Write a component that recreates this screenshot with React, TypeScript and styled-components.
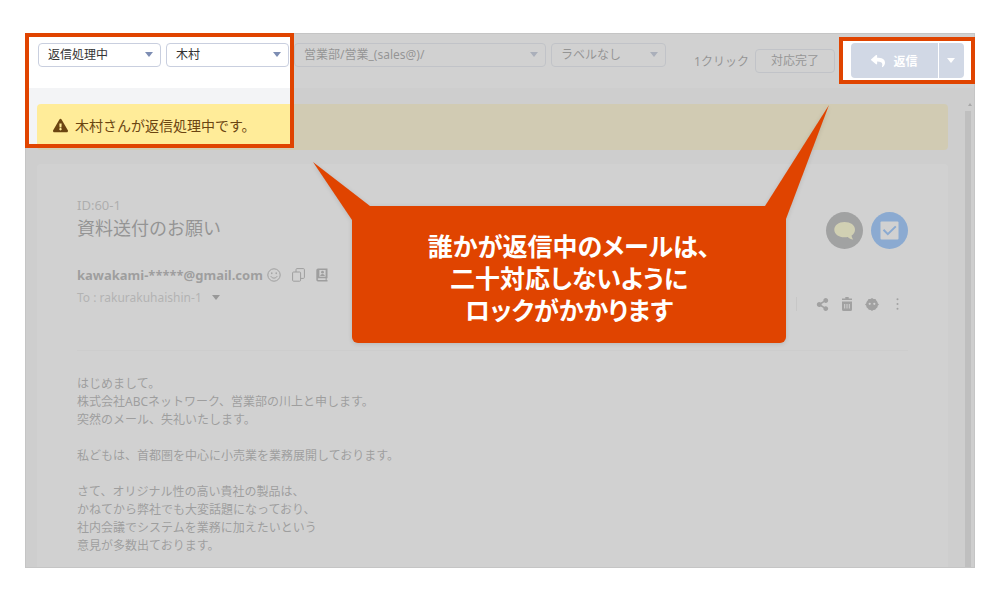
import React from "react";
import styled, { createGlobalStyle } from "styled-components";
import { FaExclamationTriangle, FaReply, FaShareAlt } from "react-icons/fa";

const accent = "#e04400";
const uiFont = `"Noto Sans", "Noto Sans CJK JP", sans-serif`;

const GlobalStyle = createGlobalStyle`
  *, *::before, *::after { box-sizing: border-box; }
  body { margin: 0; background: #fff; font-family: ${uiFont}; font-size: 12px; color: #333; }
  button, select { font: inherit; color: inherit; margin: 0; }
  h1, p { margin: 0; font-weight: 400; }
`;

const Page = styled.div`
  padding: 33px 25px;
`;

const Screen = styled.div`
  position: relative;
  border: 1px solid #d8d8d8;
  background: #f3f4f6;
`;

const Toolbar = styled.header`
  display: flex;
  align-items: flex-start;
  gap: 5px;
  height: 54px;
  padding: 9px 10px 0 12px;
  background: #fff;
`;

const SelectBox = styled.label<{ $grow: number }>`
  position: relative;
  display: block;
  flex: ${(p) => p.$grow} 1 0;
  min-width: 0;
`;

const Select = styled.select`
  display: block;
  appearance: none;
  width: 100%;
  height: 24px;
  padding: 0 24px 0 9px;
  border: 1px solid #c9cfdf;
  border-radius: 4px;
  background: #fff;
  line-height: 20px;
`;

const Caret = styled.span<{ $color?: string }>`
  display: block;
  border: 4px solid transparent;
  border-top: 5px solid ${(p) => p.$color ?? "#7d8db3"};
  border-bottom: 0;
`;

const SelectCaret = styled(Caret)`
  position: absolute;
  right: 8px;
  top: 9px;
  pointer-events: none;
`;

const OneClick = styled.div`
  display: flex;
  align-items: center;
  gap: 6px;
  height: 36px;
  margin: 0 11px 0 23px;
  white-space: nowrap;
`;

const DoneButton = styled.button`
  height: 24px;
  padding: 0 15px;
  border: 1px solid #c9cfdf;
  border-radius: 4px;
  background: #fff;
  line-height: 20px;
`;

const ReplyGroup = styled.div`
  display: flex;
  gap: 1px;
  height: 35px;
`;

const ReplyButton = styled.button<{ $menu?: boolean }>`
  display: flex;
  align-items: center;
  justify-content: center;
  gap: 8px;
  width: ${(p) => (p.$menu ? 25 : 87)}px;
  padding: 0;
  border: 0;
  border-radius: ${(p) => (p.$menu ? "0 4px 4px 0" : "4px 0 0 4px")};
  background: #d1d8e5;
  color: #fff;
  font-weight: 700;
`;

const Content = styled.div`
  display: flex;
`;

const Main = styled.main`
  flex: 1;
  min-width: 0;
  padding: 16px 17px 0 11px;
`;

const Banner = styled.div`
  display: flex;
  align-items: center;
  gap: 7px;
  height: 46px;
  padding: 0 16px 4px;
  border-radius: 4px;
  background: #ffec99;
  color: #6b4511;
  font-size: 14px;
`;

const Card = styled.article`
  margin-top: 14px;
  padding: 32px 40px 12px;
  border-radius: 4px 4px 0 0;
  background: #fff;
`;

const MailHead = styled.div`
  display: flex;
  justify-content: space-between;
  padding-bottom: 36px;
  border-bottom: 1px solid #f0f0f0;
`;

const MailId = styled.p`
  color: #888;
  font-size: 13px;
  line-height: 18px;
`;

const Title = styled.h1`
  font-size: 18px;
  line-height: 28px;
`;

const From = styled.div`
  display: flex;
  align-items: center;
  gap: 11px;
  height: 20px;
  margin-top: 23px;
  color: #555;
`;

const Address = styled.strong`
  margin-right: -7px;
  font-size: 13px;
`;

const IconButton = styled.button`
  display: flex;
  padding: 0;
  border: 0;
  background: none;
`;

const To = styled.button`
  display: flex;
  align-items: center;
  gap: 10px;
  height: 20px;
  margin-top: 2px;
  padding: 0;
  border: 0;
  background: none;
  color: #999;
`;

const Side = styled.div`
  display: flex;
  flex-direction: column;
  align-items: flex-end;
  gap: 45px;
  padding-top: 16px;
`;

const Rounds = styled.div`
  display: flex;
  gap: 8px;
`;

const Round = styled.button<{ $color: string }>`
  display: flex;
  align-items: center;
  justify-content: center;
  width: 37px;
  height: 37px;
  padding: 0;
  border: 0;
  border-radius: 50%;
  background: ${(p) => p.$color};
`;

const Actions = styled.div`
  display: flex;
  align-items: center;
  gap: 12px;
  height: 20px;
  padding: 0 4px 0 20px;
  background: linear-gradient(#ddd, #ddd) left center / 1px 14px no-repeat;
  color: #606060;
`;

const MailBody = styled.p`
  padding-top: 24px;
  color: #555;
  line-height: 18px;
  white-space: pre-line;
`;

const ScrollTrack = styled.div`
  display: flex;
  flex-direction: column;
  align-items: flex-start;
  width: 9px;
  padding-top: 15px;
`;

const ScrollArrow = styled.span`
  margin: 0 0 5px 3px;
  border: 2px solid transparent;
  border-top: 0;
  border-bottom: 3px solid #777;
`;

const ScrollThumb = styled.span`
  flex: 1;
  width: 6px;
  background: #c1c1c1;
`;

/* Grey veil over the screen, open where the two highlight frames are. */
const Veil = styled.div`
  position: absolute;
  inset: -1px;
  background: rgba(190, 190, 190, 0.7);
  pointer-events: none;
  clip-path: polygon(
    evenodd,
    0 0, 100% 0, 100% 100%, 0 100%, 0 0,
    2px 2px, 267px 2px, 267px 113px, 2px 113px, 2px 2px,
    0 0,
    calc(100% - 134px) 6px, calc(100% - 2px) 6px, calc(100% - 2px) 49px, calc(100% - 134px) 49px, calc(100% - 134px) 6px,
    0 0
  );
`;

const Highlight = styled.div<{ $side: "left" | "right" }>`
  position: absolute;
  ${(p) =>
    p.$side === "left"
      ? "left: -1px; top: -1px; width: 269px; height: 115px;"
      : "right: -1px; top: 3px; width: 136px; height: 47px;"}
  border: 4px solid ${accent};
  pointer-events: none;
`;

const Callout = styled.aside`
  position: absolute;
  left: 326px;
  right: 188px;
  top: 172px;
  padding: 23px 0 18px;
  border-radius: 6px;
  background: ${accent};
  color: #fff;
  font-family: "Noto Sans CJK JP", sans-serif;
  font-feature-settings: "palt";
  font-size: 25px;
  font-weight: 700;
  line-height: 32px;
  text-align: center;
  filter: drop-shadow(0 1px 2px rgba(0, 0, 0, 0.12));
`;

const Tail = styled.svg<{ $side: "left" | "right" }>`
  position: absolute;
  ${(p) => (p.$side === "left" ? "left: -39px; top: -44px;" : "right: -43px; top: -101px;")}
  fill: ${accent};
`;

const filters = [
  { label: "対応状態", value: "返信処理中", grow: 123 },
  { label: "担当者", value: "木村", grow: 123 },
  { label: "フォルダ", value: "営業部/営業_(sales@)/", grow: 252 },
  { label: "ラベル", value: "ラベルなし", grow: 115 },
];

const mailText = `はじめまして。
株式会社ABCネットワーク、営業部の川上と申します。
突然のメール、失礼いたします。

私どもは、首都圏を中心に小売業を業務展開しております。

さて、オリジナル性の高い貴社の製品は、
かねてから弊社でも大変話題になっており、
社内会議でシステムを業務に加えたいという
意見が多数出ております。`;

const SmileIcon = () => (
  <svg width="14" height="14" viewBox="0 0 14 14" fill="none" stroke="currentColor" strokeWidth="1">
    <circle cx="7" cy="7" r="6.200" />
    <path d="M4 8.600c1.200 2.100 4.800 2.100 6 0" strokeLinecap="round" />
    <path d="M4.800 4.800v.8M9.200 4.800v.8" strokeLinecap="round" strokeWidth="1.300" />
  </svg>
);

const CopyIcon = () => (
  <svg width="13" height="14" viewBox="0 0 13 14" fill="none" stroke="currentColor" strokeWidth="1">
    <rect x="0.600" y="4" width="8" height="9.200" rx="1" />
    <path d="M4 4V1.600a1 1 0 0 1 1-1h6.400a1 1 0 0 1 1 1v7.800a1 1 0 0 1-1 1H8.600" />
  </svg>
);

const AddressBookIcon = () => (
  <svg width="12" height="14" viewBox="0 0 12 14">
    <path
      fill="currentColor"
      fillRule="evenodd"
      d="M2 .5h9.500v9.700h-.8v1.800h.8v1.500H2A1.800 1.800 0 0 1 .3 11.700V2.300A1.800 1.800 0 0 1 2 .5zm.6 9.700a.9.9 0 0 0 0 1.800h7v-1.800zM3.400 2v6.800h6.200V2z"
    />
    <circle cx="6.500" cy="4.200" r="1.400" fill="currentColor" />
    <path d="M4.200 8c0-2.700 4.600-2.700 4.600 0z" fill="currentColor" />
  </svg>
);

const BubbleIcon = () => (
  <svg width="22" height="20" viewBox="0 0 22 20" fill="#fffa9c">
    <path d="M10.500 1C16.400 1 21 4 21 8.700c0 2.400-1.300 4.500-3.400 5.900.1 1.600.8 2.900 1.700 4-2.200-.3-4.200-1.300-5.500-2.700-1 .3-2.100.4-3.300.4C4.700 16.300.3 13.100.3 8.700S4.700 1 10.500 1z" />
  </svg>
);

const CheckIcon = () => (
  <svg width="19" height="19" viewBox="0 0 19 19">
    <rect x="0.500" y="0.500" width="18" height="18" rx="1" fill="#fff" />
    <path d="M3.500 8.800l4.300 4.400 8-7.800" fill="none" stroke="#147eff" strokeWidth="2" />
  </svg>
);

const TrashIcon = () => (
  <svg width="12" height="14" viewBox="0 0 12 14">
    <path
      fill="currentColor"
      fillRule="evenodd"
      d="M4.300 0h3.400v1.400H11v1.700H1V1.400h3.300zM1 4.500h10v8a1.500 1.500 0 0 1-1.500 1.500h-7A1.500 1.500 0 0 1 1 12.500zM3.200 7v4.500h1V7zm2.300 0v4.500h1V7zm2.300 0v4.500h1V7z"
    />
  </svg>
);

const FaceIcon = () => (
  <svg width="14" height="13" viewBox="0 0 14 13">
    <path
      fill="currentColor"
      d="M7 0l1.600.9L10.500 1l.8 1.600 1.200 1.300.2 1.300L14 6.500l-1.300 1.300-.2 1.400-1.400 1.200-.9 1.400-1.800.2L7 13l-1.400-1-1.800-.2-.9-1.400-1.400-1.200-.2-1.400L0 6.500l1.300-1.300.2-1.300 1.200-1.300L3.500 1l1.900-.1z"
    />
    <g fill="#fff">
      <circle cx="4.700" cy="5.800" r="1.100" />
      <circle cx="9.300" cy="5.800" r="1.100" />
    </g>
  </svg>
);

const DotsIcon = () => (
  <svg width="13" height="12" viewBox="0 0 13 12" fill="currentColor">
    <circle cx="6.500" cy="1.300" r="1" />
    <circle cx="6.500" cy="6" r="1" />
    <circle cx="6.500" cy="10.700" r="1" />
  </svg>
);

export default function App() {
  return (
    <Page>
      <GlobalStyle />
      <Screen>
        <Toolbar>
          {filters.map((f) => (
            <SelectBox key={f.label} $grow={f.grow}>
              <Select aria-label={f.label} defaultValue={f.value}>
                <option>{f.value}</option>
              </Select>
              <SelectCaret />
            </SelectBox>
          ))}
          <OneClick>
            <span>1クリック</span>
            <DoneButton type="button">対応完了</DoneButton>
          </OneClick>
          <ReplyGroup>
            <ReplyButton type="button">
              <FaReply size={14} />
              返信
            </ReplyButton>
            <ReplyButton type="button" $menu aria-label="返信メニュー">
              <Caret $color="#fff" />
            </ReplyButton>
          </ReplyGroup>
        </Toolbar>
        <Content>
          <Main>
            <Banner role="status">
              <FaExclamationTriangle size={15} />
              木村さんが返信処理中です。
            </Banner>
            <Card>
              <MailHead>
                <div>
                  <MailId>ID:60-1</MailId>
                  <Title>資料送付のお願い</Title>
                  <From>
                    <Address>kawakami-*****@gmail.com</Address>
                    <IconButton type="button" aria-label="顔"><SmileIcon /></IconButton>
                    <IconButton type="button" aria-label="コピー"><CopyIcon /></IconButton>
                    <IconButton type="button" aria-label="アドレス帳"><AddressBookIcon /></IconButton>
                  </From>
                  <To type="button">
                    To : rakurakuhaishin-1
                    <Caret $color="#444" />
                  </To>
                </div>
                <Side>
                  <Rounds>
                    <Round type="button" $color="#606162" aria-label="コメント"><BubbleIcon /></Round>
                    <Round type="button" $color="#147eff" aria-label="チェック"><CheckIcon /></Round>
                  </Rounds>
                  <Actions>
                    <IconButton type="button" aria-label="共有"><FaShareAlt size={13} /></IconButton>
                    <IconButton type="button" aria-label="削除"><TrashIcon /></IconButton>
                    <IconButton type="button" aria-label="迷惑メール"><FaceIcon /></IconButton>
                    <IconButton type="button" aria-label="その他"><DotsIcon /></IconButton>
                  </Actions>
                </Side>
              </MailHead>
              <MailBody>{mailText}</MailBody>
            </Card>
          </Main>
          <ScrollTrack>
            <ScrollArrow />
            <ScrollThumb />
          </ScrollTrack>
        </Content>
        <Veil />
        <Highlight $side="left" />
        <Highlight $side="right" />
        <Callout>
          <Tail $side="left" width="60" height="60" viewBox="0 0 60 60">
            <path d="M0 0L57 44V58H39Z" />
          </Tail>
          <Tail $side="right" width="66" height="116" viewBox="0 0 66 116">
            <path d="M66 0L2 101V114H23Z" />
          </Tail>
          誰かが返信中のメールは、
          <br />
          二十対応しないように
          <br />
          ロックがかかります
        </Callout>
      </Screen>
    </Page>
  );
}
